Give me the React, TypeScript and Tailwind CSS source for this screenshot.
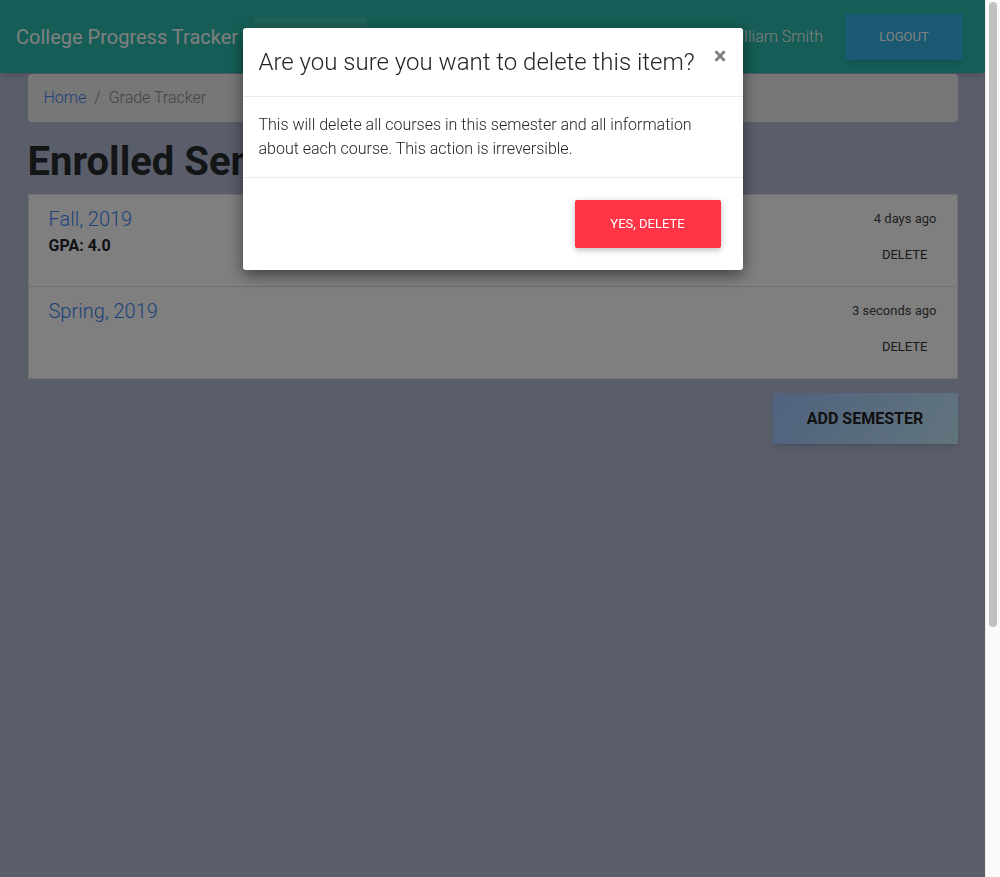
const semesters = [
  { name: "Fall, 2019", gpa: "4.0", when: "4 days ago" },
  { name: "Spring, 2019", gpa: null, when: "3 seconds ago" },
];

function Navbar() {
  return (
    <nav className="flex h-[73px] items-center bg-[#2bbbad] px-4 shadow-md">
      <span className="text-[20px] text-white">College Progress Tracker</span>
      <div className="ml-4 flex h-full items-end">
        <a className="block h-[56px] w-[113px] rounded-sm bg-white/10 text-white" />
      </div>
      <div className="ml-auto flex items-center">
        <span className="text-[16px] font-light text-white">William Smith</span>
        <button className="mx-[6px] ml-[22px] h-[46px] w-[118px] rounded-[2px] bg-[#33b5e5] text-[13px] text-white uppercase shadow-md">
          Logout
        </button>
      </div>
    </nav>
  );
}

function SemesterRow({ s, first }: { s: (typeof semesters)[number]; first: boolean }) {
  return (
    <div className={`flex justify-between px-5 ${first ? "h-[91px]" : "h-[92px] border-t border-[#e0e0e0]"}`}>
      <div className="pt-[9px]">
        <a className="block text-[20px] leading-[30px] font-light text-[#3a84f4]">{s.name}</a>
        {s.gpa && <div className="text-[16px] leading-6 font-bold text-[#212529]">GPA: {s.gpa}</div>}
      </div>
      <div className="flex flex-col items-end pt-[9px]">
        <span className="text-[13px] leading-[30px] text-[#444]">{s.when}</span>
        <button className="mt-[4px] h-[34px] px-[9px] text-[13px] text-[#333] uppercase">Delete</button>
      </div>
    </div>
  );
}

function DeleteModal() {
  return (
    <div className="fixed inset-y-0 right-[15px] left-0 z-50 bg-black/50">
      <div className="mx-auto mt-[28px] w-[500px] rounded-[3px] bg-white shadow-[0_5px_15px_rgba(0,0,0,0.5)]">
        <div className="flex items-start border-b border-[#e9ecef] p-4">
          <h5 className="text-[24px] leading-9 font-light text-[#212529]">Are you sure you want to delete this item?</h5>
          <button className="-m-4 ml-auto p-4 text-[24px] leading-6 font-bold text-black opacity-50">×</button>
        </div>
        <div className="p-4 text-[16px] leading-6 font-light text-[#212529]">
          This will delete all courses in this semester and all information about each course. This action is
          irreversible.
        </div>
        <div className="flex justify-end border-t border-[#e9ecef] p-4">
          <button className="m-[6px] h-[48px] w-[146px] rounded-[2px] bg-[#ff3547] text-[13px] text-white uppercase shadow-[0_2px_5px_rgba(0,0,0,0.16),0_2px_10px_rgba(0,0,0,0.12)]">
            Yes, delete
          </button>
        </div>
      </div>
    </div>
  );
}

function Scrollbar() {
  return (
    <div className="w-[15px] shrink-0 border-l border-[#ececec] bg-[#fafafa] pt-[2px] pl-[3px]">
      <div className="h-[625px] w-[8px] rounded-full bg-[#c1c1c1]" />
    </div>
  );
}

export default function App() {
  return (
    <div className="flex h-[877px] overflow-hidden font-['Roboto',sans-serif]">
      <div className="w-[985px] bg-[#b4bcd6]">
        <Navbar />
        <div className="mx-auto w-[960px] px-[15px]">
          <div className="mt-px flex h-[48px] items-center rounded bg-[#eeeeee] px-4 text-[16px] font-light">
            <a className="text-[#3a84f4]">Home</a>
            <span className="px-2 text-[#888]">/</span>
            <span className="text-[#888]">Grade Tracker</span>
          </div>
          <h1 className="mt-4 mb-2 text-[40px] leading-[48px] font-bold text-[#262a2e]">Enrolled Semesters</h1>
          <div className="border border-[#e0e0e0] bg-white">
            {semesters.map((s, i) => (
              <SemesterRow key={s.name} s={s} first={i === 0} />
            ))}
          </div>
          <div className="mt-[14px] flex justify-end">
            <button className="h-[51px] w-[185px] rounded-[2px] bg-[linear-gradient(120deg,#a1c4fd_0%,#c2e9fb_100%)] text-[16px] font-bold text-[#222] uppercase shadow-md">
              Add Semester
            </button>
          </div>
        </div>
      </div>
      <Scrollbar />
      <DeleteModal />
    </div>
  );
}
